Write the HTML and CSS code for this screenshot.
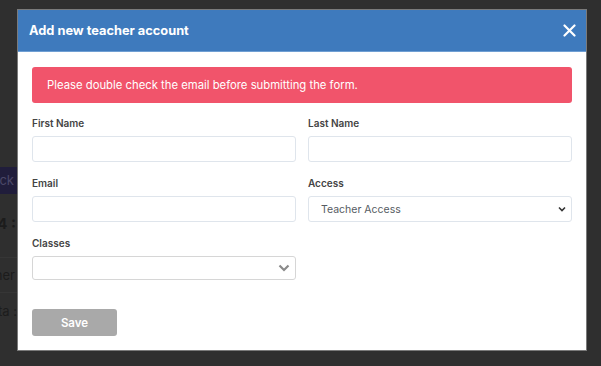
FILE: index.html
```html
<!DOCTYPE html>
<html lang="en">
<head>
    <meta charset="UTF-8" />
    <title>Teachers</title>
    <link rel="stylesheet" href="styles.css">
</head>
<body>
    <!-- page behind the dimmed overlay -->
    <div class="page">
        <div class="side">
            <div class="side-row back-row"><span class="back-btn">Back</span></div>
            <div class="side-row week-row"><span>Week 4 :</span></div>
            <div class="side-row line-row"><span>Teacher</span></div>
            <div class="side-row data-row"><span>Data :</span></div>
        </div>
    </div>

    <div class="modal">
        <div class="modal-header">
            <h1>Add new teacher account</h1>
            <button class="close-btn" aria-label="Close">
                <svg width="13" height="13" viewBox="0 0 13 13">
                    <path d="M1.5 1.5 L11.5 11.5 M11.5 1.5 L1.5 11.5" stroke="#ffffff" stroke-width="2.2" stroke-linecap="round"/>
                </svg>
            </button>
        </div>
        <div class="modal-body">
            <div class="alert">Please double check the email before submitting the form.</div>
            <div class="form-grid">
                <div class="field">
                    <label>First Name</label>
                    <input type="text">
                </div>
                <div class="field">
                    <label>Last Name</label>
                    <input type="text">
                </div>
                <div class="field">
                    <label>Email</label>
                    <input type="text">
                </div>
                <div class="field">
                    <label>Access</label>
                    <div class="select">
                        <span>Teacher Access</span>
                        <svg width="8" height="6" viewBox="0 0 8 6">
                            <path d="M1 1.5 L4 4.5 L7 1.5" stroke="#333" stroke-width="1.6" fill="none"/>
                        </svg>
                    </div>
                </div>
                <div class="field">
                    <label>Classes</label>
                    <div class="select classes">
                        <span></span>
                        <svg width="12" height="8" viewBox="0 0 12 8">
                            <path d="M1.5 1.5 L6 6 L10.5 1.5" stroke="#8a8a8a" stroke-width="2.2" fill="none"/>
                        </svg>
                    </div>
                </div>
            </div>
            <button class="save-btn">Save</button>
        </div>
    </div>
</body>
</html>
```

FILE: styles.css
```css
*,
*:before,
*:after{
    padding: 0;
    margin: 0;
    box-sizing: border-box;
}
body{
    background-color: #2f2f2f;
    font-family: "Inter", "Noto Sans", sans-serif;
    width: 601px;
    height: 366px;
    overflow: hidden;
}
.page{
    padding-top: 167px;
}
.side{
    width: 17px;
    overflow: hidden;
    display: flex;
    flex-direction: column;
}
.side-row{
    display: flex;
    justify-content: flex-end;
    white-space: nowrap;
    color: #1c1c1c;
    font-size: 14px;
}
.back-btn{
    display: block;
    width: 60px;
    height: 27px;
    line-height: 27px;
    padding-right: 3px;
    text-align: right;
    background-color: #201d3b;
    color: #4b4868;
    font-size: 13px;
}
.week-row{
    margin-top: 20px;
    font-weight: 700;
    font-size: 15px;
    padding-right: 1px;
}
.line-row{
    margin-top: 24px;
    padding: 9px 2px 9px 0;
    border-top: 1px solid #363636;
    border-bottom: 1px solid #363636;
    font-size: 13px;
}
.data-row{
    margin-top: 10px;
    font-size: 13px;
}
.modal{
    position: absolute;
    left: 18px;
    top: 10px;
    width: 568px;
    background-color: #ffffff;
    box-shadow: 0 0 0 1px #7a7a7a;
}
.modal-header{
    height: 42px;
    background-color: #3e7abd;
    border-bottom: 1px solid #6f9fd3;
    display: flex;
    align-items: center;
    justify-content: space-between;
    padding: 0 8px 0 11px;
}
.modal-header h1{
    color: #ffffff;
    font-size: 12.8px;
    font-weight: 700;
}
.close-btn{
    background: none;
    border: none;
    display: flex;
    padding: 2px;
}
.modal-body{
    padding: 15px 14px 14px;
}
.alert{
    height: 36px;
    line-height: 36px;
    background-color: #f1546b;
    color: #ffffff;
    font-size: 11.3px;
    padding-left: 15px;
    border-radius: 3px;
    margin-bottom: 12px;
}
.form-grid{
    display: grid;
    grid-template-columns: 1fr 1fr;
    column-gap: 12px;
    row-gap: 13px;
}
.field label{
    display: block;
    font-size: 10px;
    font-weight: 600;
    color: #444444;
    line-height: 16px;
    margin-bottom: 5px;
}
.field input{
    display: block;
    width: 100%;
    height: 26px;
    border: 1px solid #dfe5ec;
    border-radius: 3px;
    outline: none;
}
.select{
    height: 26px;
    border: 1px solid #dfe5ec;
    border-radius: 3px;
    display: flex;
    align-items: center;
    justify-content: space-between;
    padding: 0 5px 0 12px;
    font-size: 10.5px;
    color: #555b62;
}
.select.classes{
    height: 24px;
    border-color: #d6d6d6;
    padding-right: 5px;
}
.save-btn{
    display: block;
    margin-top: 29px;
    width: 85px;
    height: 27px;
    background-color: #a9a9a9;
    color: #ffffff;
    border: none;
    border-radius: 3px;
    font-family: "Inter", "Noto Sans", sans-serif;
    font-size: 11.5px;
    font-weight: 600;
}
```
